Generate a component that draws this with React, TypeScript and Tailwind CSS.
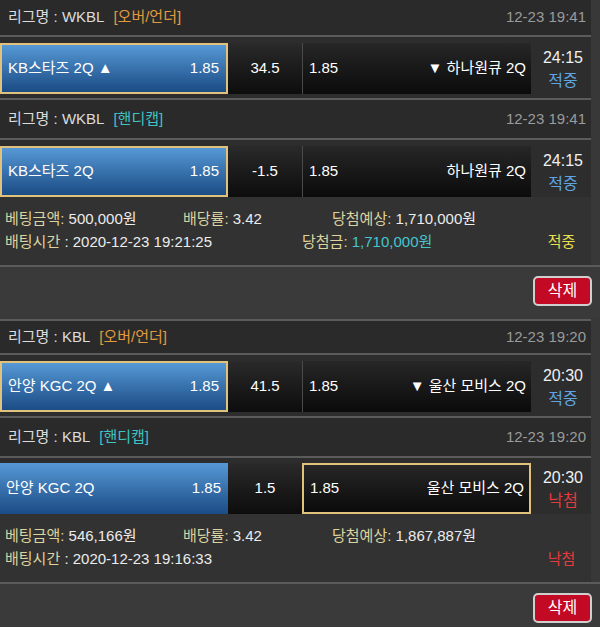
import React from "react";

type Sel = "home" | "away";

const Line = () => <div className="h-[2px] bg-[#5b5b5b]" />;

function Header({
  league,
  type,
  typeCls,
  date,
  hCls,
}: {
  league: string;
  type: string;
  typeCls: string;
  date: string;
  hCls: string;
}) {
  return (
    <div className={`flex items-center justify-between bg-[#2a2a2a] pl-[8px] pr-[5px] ${hCls}`}>
      <div className="text-[15px] text-[#dcdcdc]">
        리그명 : {league}
        <span className={`ml-[9px] ${typeCls}`}>[{type}]</span>
      </div>
      <div className="text-[15px] text-[#9b9b9b]">{date}</div>
    </div>
  );
}

function Match({
  home,
  odd1,
  center,
  odd2,
  away,
  time,
  res,
  resCls,
  sel,
  padCls,
}: {
  home: string;
  odd1: string;
  center: string;
  odd2: string;
  away: string;
  time: string;
  res: string;
  resCls: string;
  sel: Sel;
  padCls: string;
}) {
  return (
    <div className={`flex bg-[#2d2d2d] ${padCls}`}>
      <div
        className={`flex h-[51px] w-[228px] items-center justify-between bg-linear-to-b from-[#5699d6] to-[#1b4c85] pl-[6px] pr-[7px] text-[15px] text-white ${
          sel === "home" ? "border-2 border-[#e0c27c]" : ""
        }`}
      >
        <span>{home}</span>
        <span>{odd1}</span>
      </div>
      <div className="flex h-[51px] w-[74px] items-center justify-center bg-linear-to-b from-[#2a2a2a] to-[#0d0d0d] text-[15px] text-white">
        {center}
      </div>
      <div
        className={`flex h-[51px] w-[229px] items-center justify-between bg-linear-to-b from-[#272727] to-[#0b0b0b] pl-[6px] pr-[5px] text-[15px] text-white ${
          sel === "away" ? "border-2 border-[#e0c27c]" : "border-l border-[#4a4a4a]"
        }`}
      >
        <span>{odd2}</span>
        <span>{away}</span>
      </div>
      <div className="flex flex-1 flex-col items-center justify-center pl-[4px] text-[16px] leading-[23px]">
        <span className="text-[#f0f0f0]">{time}</span>
        <span className={resCls}>{res}</span>
      </div>
    </div>
  );
}

function Info({
  amount,
  expect,
  time,
  win,
  res,
  resCls,
}: {
  amount: string;
  expect: string;
  time: string;
  win?: string;
  res: string;
  resCls: string;
}) {
  const label = "text-[#dcd39e]";
  const val = "text-[#ececec]";
  return (
    <div className="bg-[#323232] pb-[12px] pl-[5px] pt-[10px] text-[15px] leading-[23px]">
      <div className="flex">
        <div className="w-[178px]">
          <span className={label}>베팅금액:</span> <span className={val}>{amount}</span>
        </div>
        <div className="w-[149px]">
          <span className={label}>배당률:</span> <span className={val}>3.42</span>
        </div>
        <div>
          <span className={label}>당첨예상:</span> <span className={val}>{expect}</span>
        </div>
      </div>
      <div className="flex">
        <div className="w-[297px]">
          <span className={label}>배팅시간</span> <span className={val}>: {time}</span>
        </div>
        <div className="w-[230px]">
          {win ? (
            <>
              <span className={label}>당첨금:</span> <span className="text-[#45c6cf]">{win}</span>
            </>
          ) : null}
        </div>
        <div className={`w-[59px] text-center ${resCls}`}>{res}</div>
      </div>
    </div>
  );
}

function DeleteRow() {
  return (
    <div className="flex h-[52px] items-start justify-end bg-[#3a3a3a] pr-[8px] pt-[9px]">
      <button className="h-[30px] w-[59px] rounded-[5px] border-2 border-[#cfcfcf] bg-[#c30a25] text-[16px] text-white">
        삭제
      </button>
    </div>
  );
}

export default function App() {
  const blue = "text-[#5fa6e2]";
  const red = "text-[#e63a3c]";
  return (
    <div className="min-h-[627px] w-[600px] overflow-hidden bg-[#383838] font-['Liberation_Sans','Noto_Sans_CJK_KR',sans-serif]">
      {/* Group 1 */}
      <div className="w-[591px]">
        <Header league="WKBL" type="오버/언더" typeCls="text-[#e29a3f]" date="12-23 19:41" hCls="h-[35px]" />
        <Line />
        <Match
          home="KB스타즈 2Q ▲"
          odd1="1.85"
          center="34.5"
          odd2="1.85"
          away="▼ 하나원큐 2Q"
          time="24:15"
          res="적중"
          resCls={blue}
          sel="home"
          padCls="pt-[6px] pb-[4px]"
        />
        <Line />
        <Header league="WKBL" type="핸디캡" typeCls="text-[#3ec4c4]" date="12-23 19:41" hCls="h-[38px]" />
        <Line />
        <Match
          home="KB스타즈 2Q"
          odd1="1.85"
          center="-1.5"
          odd2="1.85"
          away="하나원큐 2Q"
          time="24:15"
          res="적중"
          resCls={blue}
          sel="home"
          padCls="pt-[6px]"
        />
        <Info
          amount="500,000원"
          expect="1,710,000원"
          time="2020-12-23 19:21:25"
          win="1,710,000원"
          res="적중"
          resCls="text-[#e8e04c]"
        />
      </div>
      <Line />
      <DeleteRow />

      {/* Group 2 */}
      <div className="w-[591px]">
        <Line />
        <Header league="KBL" type="오버/언더" typeCls="text-[#e29a3f]" date="12-23 19:20" hCls="h-[32px]" />
        <Line />
        <Match
          home="안양 KGC 2Q ▲"
          odd1="1.85"
          center="41.5"
          odd2="1.85"
          away="▼ 울산 모비스 2Q"
          time="20:30"
          res="적중"
          resCls={blue}
          sel="home"
          padCls="pt-[6px] pb-[4px]"
        />
        <Line />
        <Header league="KBL" type="핸디캡" typeCls="text-[#3ec4c4]" date="12-23 19:20" hCls="h-[38px]" />
        <Line />
        <Match
          home="안양 KGC 2Q"
          odd1="1.85"
          center="1.5"
          odd2="1.85"
          away="울산 모비스 2Q"
          time="20:30"
          res="낙첨"
          resCls={red}
          sel="away"
          padCls="pt-[5px]"
        />
        <Info
          amount="546,166원"
          expect="1,867,887원"
          time="2020-12-23 19:16:33"
          res="낙첨"
          resCls={red}
        />
      </div>
      <Line />
      <DeleteRow />
    </div>
  );
}
